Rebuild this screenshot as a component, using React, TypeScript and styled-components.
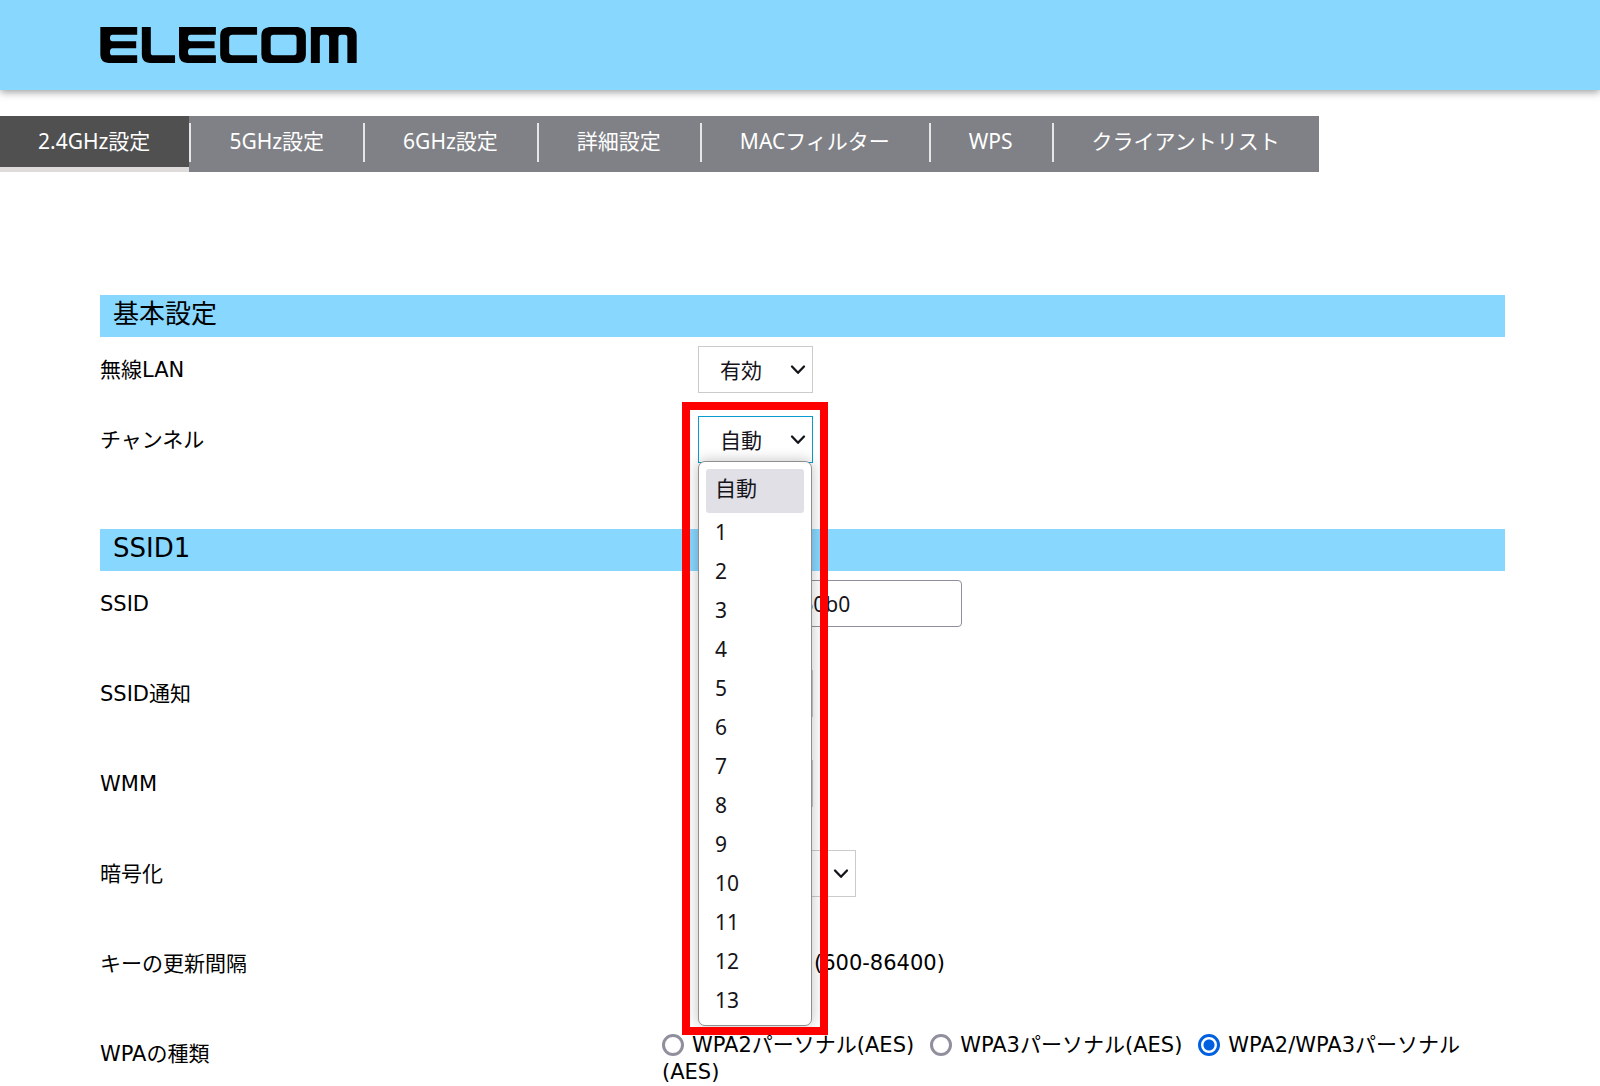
import React from "react";
import styled, { createGlobalStyle, css } from "styled-components";

const bodyFont = `"DejaVu Sans", "Noto Sans CJK JP", sans-serif`;
const uiFont = `"Noto Sans", "Noto Sans CJK JP", sans-serif`;

const GlobalStyle = createGlobalStyle`
  *, *::before, *::after { box-sizing: border-box; }
  body {
    margin: 0;
    background: #fff;
    color: #000;
    font: 21px/27px ${bodyFont};
  }
`;

const Header = styled.header`
  display: flex;
  align-items: center;
  height: 90px;
  padding: 0 100px;
  background: #88d7ff;
  box-shadow: 0 2px 8px rgba(0, 0, 0, 0.4);
`;

const LogoMark = styled.svg`
  display: block;
  width: 257px;
  height: 36px;
`;

const TabList = styled.ul`
  display: flex;
  width: fit-content;
  margin: 26px 0 0;
  padding: 0;
  list-style: none;
  background: #7f8186;
`;

const TabItem = styled.li<{ $active?: boolean }>`
  height: 56px;
  padding-top: 7px;
  ${(p) =>
    p.$active &&
    css`
      background: #505050;
      border-bottom: 5px solid #dfdbdb;
    `}
`;

const TabLink = styled.a<{ $first?: boolean }>`
  display: block;
  padding: 0 39px 2px 38px;
  border-left: ${(p) => (p.$first ? "0" : "2px solid #e6e6e6")};
  color: #fff;
  font: 21px/37px ${uiFont};
  text-decoration: none;
  white-space: nowrap;
`;

const Main = styled.main`
  display: flex;
  flex-direction: column;
  gap: 66px;
  padding: 123px 95px 0 100px;
`;

const SectionTitle = styled.h2`
  margin: 0 0 9px;
  padding: 0 13px 4px;
  background: #88d7ff;
  font-size: 26px;
  font-weight: 400;
  line-height: 38px;
`;

const Rows = styled.div<{ $gap: number }>`
  display: flex;
  flex-direction: column;
  gap: ${(p) => p.$gap}px;
`;

const Row = styled.div`
  display: grid;
  grid-template-columns: 40% 1fr;
  align-items: start;
`;

const rowLabel = css`
  padding-top: 2px;
  line-height: 45px;
`;

const RowLabel = styled.label`
  ${rowLabel}
`;

const RowCaption = styled.span`
  ${rowLabel}
`;

const Field = styled.div`
  display: flex;
  align-items: center;
  gap: 11px;
  min-height: 47px;
  padding-left: 36px;
`;

const SelectFrame = styled.div<{ $width: number }>`
  position: relative;
  display: grid;
  grid-template-areas: "box";
  align-items: center;
  width: ${(p) => p.$width}px;

  > select,
  > svg {
    grid-area: box;
  }

  > svg {
    justify-self: end;
    margin-right: 7px;
    pointer-events: none;
  }
`;

const SelectBox = styled.select<{ $open?: boolean }>`
  appearance: none;
  width: 100%;
  height: 47px;
  padding: 2px 30px 0 21px;
  border: 1px solid ${(p) => (p.$open ? "#0a9bd0" : "#cbcbcd")};
  border-radius: 0;
  outline: none;
  background: #fff;
  color: #15141a;
  font: 21px/27px ${uiFont};
`;

const TextBox = styled.input<{ $width: number }>`
  width: ${(p) => p.$width}px;
  height: 47px;
  padding: 0 24px;
  border: 1px solid #8f8f9d;
  border-radius: 4px;
  background: #fff;
  color: #15141a;
  font: 21px/27px ${uiFont};
`;

const OptionList = styled.ul`
  position: absolute;
  z-index: 2;
  top: 45px;
  left: 0;
  width: 114px;
  margin: 0;
  padding: 7px 7px 5px;
  border: 1px solid #8f8f8f;
  border-radius: 7px;
  background: #fff;
  box-shadow: 0 0 14px rgba(0, 0, 0, 0.25);
  list-style: none;
`;

const OptionItem = styled.li<{ $selected?: boolean }>`
  padding: 0 9px ${(p) => (p.$selected ? "5px" : "0")};
  border-radius: 3px;
  background: ${(p) => (p.$selected ? "#e0e0e6" : "transparent")};
  color: #15141a;
  font: 21px/39px ${uiFont};
`;

const Highlight = styled.div`
  position: absolute;
  z-index: 3;
  top: -14px;
  left: -16px;
  width: 146px;
  height: 633px;
  border: 8px solid #f00;
  pointer-events: none;
`;

const RadioGroup = styled.div`
  padding-top: 2px;
`;

const RadioLabel = styled.label`
  margin-right: 16px;

  &:last-child {
    margin-right: 0;
  }
`;

const Radio = styled.input`
  appearance: none;
  width: 22px;
  height: 22px;
  margin: 0 8px 0 0;
  border: 3px solid #8f8f9d;
  border-radius: 50%;
  background: #fff;
  vertical-align: -4px;

  &:checked {
    border-color: #0060df;
    background: radial-gradient(circle, #0060df 5px, #fff 6px);
  }
`;

const Logo = () => (
  <LogoMark viewBox="58 82 774 108" preserveAspectRatio="none" role="img" aria-label="ELECOM">
    <path d="M59 82H170V105H96Q88 105 88 115T96 125H167V146H96Q88 146 88 157T96 167H170V190H84Q59 188 59 165Z" />
    <path d="M184 82H211V160Q211 167 219 167H284V190H208Q184 188 184 166Z" />
    <path d="M296 82H407V105H331Q323 105 323 115T331 125H403V146H331Q323 146 323 157T331 167H407V190H321Q296 188 296 165Z" />
    <path d="M444 82H531V105H457Q447 105 447 114V158Q447 167 457 167H531V190H444Q420 187 420 165V107Q420 85 444 82Z" />
    <path
      fillRule="evenodd"
      d="M568 82H654Q678 85 678 107V165Q678 187 654 190H568Q544 187 544 165V107Q544 85 568 82ZM581 105Q572 105 572 114V158Q572 167 581 167H641Q650 167 650 158V114Q650 105 641 105Z"
    />
    <path d="M693 82H806Q831 84 831 107V190H803V114Q803 105 795 105H784Q776 105 776 114V190H748V114Q748 105 740 105H728Q720 105 720 114V190H693Z" />
  </LogoMark>
);

const Chevron = () => (
  <svg width="16" height="12" viewBox="0 0 16 12" aria-hidden="true">
    <path d="M2 2.5L8 8.8L14 2.5" fill="none" stroke="#15141a" strokeWidth="2.3" strokeLinecap="round" strokeLinejoin="round" />
  </svg>
);

type DropDownProps = {
  id: string;
  options: string[];
  width?: number;
  open?: boolean;
};

const DropDown = ({ id, options, width = 115, open }: DropDownProps) => (
  <SelectFrame $width={width}>
    <SelectBox id={id} $open={open} defaultValue={options[0]}>
      {options.map((o) => (
        <option key={o}>{o}</option>
      ))}
    </SelectBox>
    <Chevron />
    {open && (
      <>
        <OptionList role="listbox" aria-labelledby={`${id}-label`}>
          {options.map((o, i) => (
            <OptionItem key={o} role="option" aria-selected={i === 0} $selected={i === 0}>
              {o}
            </OptionItem>
          ))}
        </OptionList>
        <Highlight />
      </>
    )}
  </SelectFrame>
);

type SettingProps = { id: string; label: string; children: React.ReactNode };

const Setting = ({ id, label, children }: SettingProps) => (
  <Row>
    <RowLabel id={`${id}-label`} htmlFor={id}>
      {label}
    </RowLabel>
    <Field>{children}</Field>
  </Row>
);

const tabs = ["2.4GHz設定", "5GHz設定", "6GHz設定", "詳細設定", "MACフィルター", "WPS", "クライアントリスト"];
const channels = ["自動", ...Array.from({ length: 13 }, (_, i) => String(i + 1))];
const wpaTypes = ["WPA2パーソナル(AES)", "WPA3パーソナル(AES)", "WPA2/WPA3パーソナル(AES)"];

export default function App() {
  return (
    <>
      <GlobalStyle />
      <Header>
        <Logo />
      </Header>
      <nav>
        <TabList>
          {tabs.map((t, i) => (
            <TabItem key={t} $active={i === 0}>
              <TabLink href="#" $first={i === 0} aria-current={i === 0 ? "page" : undefined}>
                {t}
              </TabLink>
            </TabItem>
          ))}
        </TabList>
      </nav>
      <Main>
        <section>
          <SectionTitle>基本設定</SectionTitle>
          <Rows $gap={23}>
            <Setting id="wlan" label="無線LAN">
              <DropDown id="wlan" options={["有効", "無効"]} />
            </Setting>
            <Setting id="channel" label="チャンネル">
              <DropDown id="channel" options={channels} open />
            </Setting>
          </Rows>
        </section>
        <section>
          <SectionTitle>SSID1</SectionTitle>
          <Rows $gap={43}>
            <Setting id="ssid" label="SSID">
              <TextBox id="ssid" type="text" defaultValue="elecom-60b0" $width={264} />
            </Setting>
            <Setting id="broadcast" label="SSID通知">
              <DropDown id="broadcast" options={["有効", "無効"]} />
            </Setting>
            <Setting id="wmm" label="WMM">
              <DropDown id="wmm" options={["有効", "無効"]} />
            </Setting>
            <Setting id="cipher" label="暗号化">
              <DropDown id="cipher" options={["WPA"]} width={158} />
            </Setting>
            <Setting id="rekey" label="キーの更新間隔">
              <TextBox id="rekey" type="text" defaultValue="" $width={105} />
              <span>(600-86400)</span>
            </Setting>
            <Row>
              <RowCaption id="wpa-label">WPAの種類</RowCaption>
              <RadioGroup role="radiogroup" aria-labelledby="wpa-label">
                {wpaTypes.map((t, i) => (
                  <RadioLabel key={t}>
                    <Radio type="radio" name="wpa" defaultChecked={i === 2} />
                    {t}
                  </RadioLabel>
                ))}
              </RadioGroup>
            </Row>
          </Rows>
        </section>
      </Main>
    </>
  );
}
